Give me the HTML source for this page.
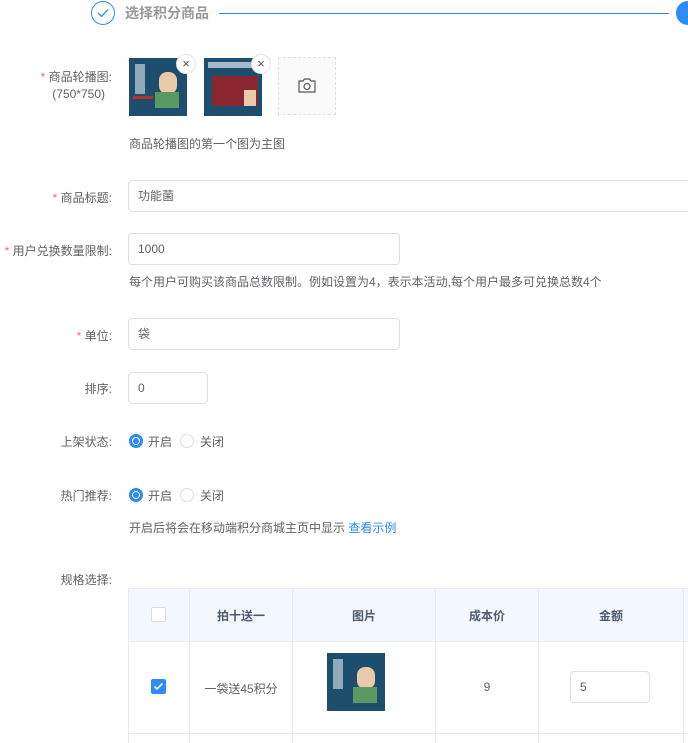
<!DOCTYPE html><html><head><meta charset="utf-8"><style>
body{margin:0;width:688px;height:743px;overflow:hidden;background:#fff;font-family:"Liberation Sans","Noto Sans CJK SC",sans-serif;font-size:12px;color:#606266;position:relative}
.a{position:absolute}
.lbl{position:absolute;right:576px;text-align:right;white-space:nowrap;color:#606266}
.req{color:#f56c6c}
.inp{position:absolute;border:1px solid #dcdfe6;border-radius:4px;box-sizing:border-box;padding-left:9px;color:#606266;line-height:30px;height:32px}
.radio{position:absolute;width:14px;height:14px;border-radius:50%;box-sizing:border-box;border:1px solid #dcdfe6}
.radio.on{border-color:#2d8cf0;background:#2d8cf0}
.radio.on:after{content:"";position:absolute;left:3px;top:3px;width:6px;height:6px;border-radius:50%;background:#2d8cf0;box-shadow:0 0 0 1px #fff}
.poster{position:absolute;background:#1d4e6e;overflow:hidden}
.x{position:absolute;width:20px;height:20px;border-radius:50%;background:#fff;border:1px solid #e4e4e4;box-sizing:border-box;text-align:center;line-height:18px;font-size:13px;color:#555}
.th{position:absolute;font-weight:bold;color:#515a6e;text-align:center}
.vl{position:absolute;width:1px;background:#e8eaec}
.hl{position:absolute;height:1px;background:#e8eaec}
</style></head><body>
<div class="a" style="left:91px;top:1px;width:24px;height:24px;border:1px solid #2d8cf0;border-radius:50%;box-sizing:border-box"></div>
<svg class="a" style="left:97px;top:8px" width="12" height="10"><path d="M1 5l3.5 3.5L11 1.5" stroke="#2d8cf0" stroke-width="1.3" fill="none"/></svg>
<div class="a" style="left:125px;top:3px;font-size:14px;font-weight:bold;color:#999">选择积分商品</div>
<div class="a" style="left:219px;top:13px;width:450px;height:1px;background:#2d8cf0"></div>
<div class="a" style="left:676px;top:1px;width:24px;height:24px;border-radius:50%;background:#2d8cf0"></div>

<div class="lbl" style="top:68px"><span class="req">* </span>商品轮播图:</div>
<div class="lbl" style="top:87px;right:583px">(750*750)</div>
<div class="poster" style="left:129px;top:58px;width:58px;height:58px"><div class="a" style="left:6px;top:6px;width:10px;height:30px;background:#dfe8ee;opacity:.6"></div><div class="a" style="left:30px;top:14px;width:18px;height:22px;background:#e8c9a8;border-radius:8px"></div><div class="a" style="left:26px;top:34px;width:24px;height:16px;background:#5a9a62"></div><div class="a" style="left:4px;top:38px;width:20px;height:3px;background:#b8302a"></div></div>
<div class="x" style="left:176px;top:54px">×</div>
<div class="poster" style="left:204px;top:58px;width:58px;height:58px"><div class="a" style="left:4px;top:4px;width:48px;height:6px;background:#dfe8ee;opacity:.7"></div><div class="a" style="left:8px;top:18px;width:46px;height:30px;background:#8a2630"></div><div class="a" style="left:40px;top:32px;width:12px;height:16px;background:#e8c9a8"></div></div>
<div class="x" style="left:251px;top:54px">×</div>
<div class="a" style="left:278px;top:57px;width:58px;height:58px;background:#fafafa;border:1px dashed #e0e0e0;box-sizing:border-box"></div>
<svg class="a" style="left:297px;top:77px" width="20" height="17"><path d="M2 4h4l1.5-2h5L14 4h4v11H2z" stroke="#555" fill="none" stroke-width="1.2"/><circle cx="10" cy="9.5" r="3" stroke="#555" fill="none" stroke-width="1.2"/></svg>
<div class="a" style="left:129px;top:135px">商品轮播图的第一个图为主图</div>

<div class="lbl" style="top:189px"><span class="req">* </span>商品标题:</div>
<div class="inp" style="left:128px;top:180px;width:570px">功能菌</div>
<div class="lbl" style="top:242px"><span class="req">* </span>用户兑换数量限制:</div>
<div class="inp" style="left:128px;top:233px;width:272px">1000</div>
<div class="a" style="left:129px;top:273px">每个用户可购买该商品总数限制。例如设置为4，表示本活动,每个用户最多可兑换总数4个</div>
<div class="lbl" style="top:327px"><span class="req">* </span>单位:</div>
<div class="inp" style="left:128px;top:318px;width:272px">袋</div>
<div class="lbl" style="top:380px">排序:</div>
<div class="inp" style="left:128px;top:372px;width:80px">0</div>
<div class="lbl" style="top:433px">上架状态:</div>
<div class="radio on" style="left:129px;top:434px"></div><div class="a" style="left:148px;top:433px">开启</div>
<div class="radio" style="left:180px;top:434px"></div><div class="a" style="left:200px;top:433px">关闭</div>
<div class="lbl" style="top:487px">热门推荐:</div>
<div class="radio on" style="left:129px;top:488px"></div><div class="a" style="left:148px;top:487px">开启</div>
<div class="radio" style="left:180px;top:488px"></div><div class="a" style="left:200px;top:487px">关闭</div>
<div class="a" style="left:129px;top:519px">开启后将会在移动端积分商城主页中显示 <span style="color:#2d8cf0">查看示例</span></div>
<div class="lbl" style="top:571px">规格选择:</div>

<div class="a" style="left:128px;top:588px;width:560px;height:53px;background:#f3f8fe"></div>
<div class="hl" style="left:128px;top:588px;width:560px"></div>
<div class="hl" style="left:128px;top:641px;width:560px"></div>
<div class="hl" style="left:128px;top:733px;width:560px"></div>
<div class="vl" style="left:128px;top:588px;height:155px"></div>
<div class="vl" style="left:189px;top:588px;height:155px"></div>
<div class="vl" style="left:292px;top:588px;height:155px"></div>
<div class="vl" style="left:435px;top:588px;height:155px"></div>
<div class="vl" style="left:538px;top:588px;height:155px"></div>
<div class="vl" style="left:683px;top:588px;height:155px"></div>
<div class="a" style="left:151px;top:607px;width:15px;height:15px;border:1px solid #dcdee2;border-radius:2px;background:#fff;box-sizing:border-box"></div>
<div class="th" style="left:190px;top:607px;width:102px">拍十送一</div>
<div class="th" style="left:293px;top:607px;width:142px">图片</div>
<div class="th" style="left:436px;top:607px;width:102px">成本价</div>
<div class="th" style="left:539px;top:607px;width:144px">金额</div>
<div class="a" style="left:151px;top:679px;width:15px;height:15px;border-radius:2px;background:#2d8cf0"></div>
<svg class="a" style="left:153px;top:682px" width="11" height="9"><path d="M1.5 4.5l2.5 2.5L9.5 1.5" stroke="#fff" stroke-width="1.6" fill="none"/></svg>
<div class="a" style="left:190px;top:680px;width:102px;text-align:center">一袋送45积分</div>
<div class="poster" style="left:327px;top:653px;width:58px;height:58px"><div class="a" style="left:6px;top:6px;width:10px;height:30px;background:#dfe8ee;opacity:.6"></div><div class="a" style="left:30px;top:14px;width:18px;height:22px;background:#e8c9a8;border-radius:8px"></div><div class="a" style="left:26px;top:34px;width:24px;height:16px;background:#5a9a62"></div></div>
<div class="a" style="left:436px;top:680px;width:102px;text-align:center">9</div>
<div class="inp" style="left:570px;top:671px;width:80px">5</div>
</body></html>
